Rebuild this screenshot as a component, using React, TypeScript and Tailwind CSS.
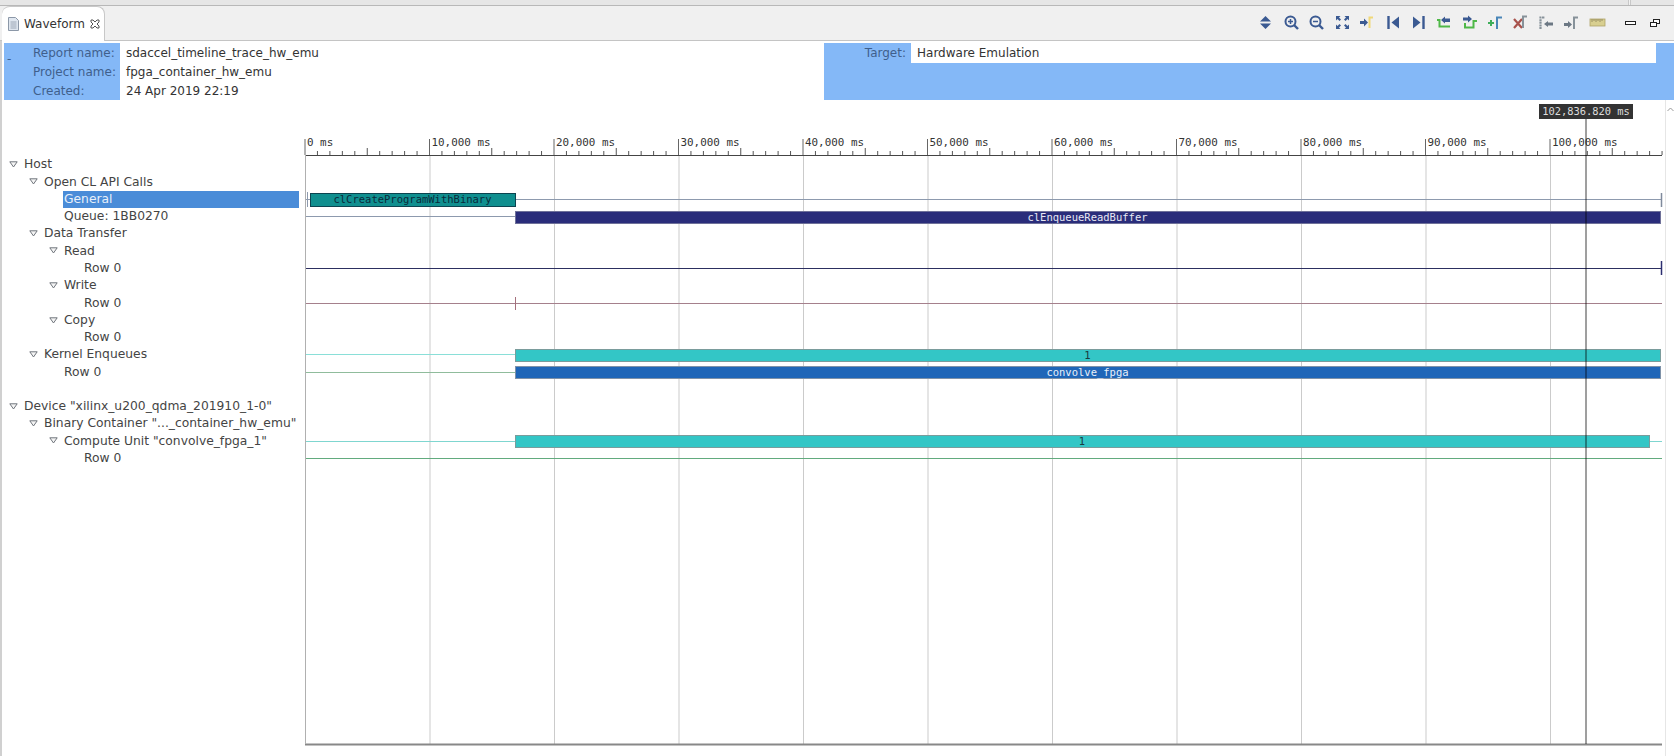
const majors = [0, 10, 20, 30, 40, 50, 60, 70, 80, 90, 100];

const treeRows = [
  { label: 'Host', level: 0, arrow: true },
  { label: 'Open CL API Calls', level: 1, arrow: true },
  { label: 'General', level: 2, selected: true },
  { label: 'Queue: 1BB0270', level: 2 },
  { label: 'Data Transfer', level: 1, arrow: true },
  { label: 'Read', level: 2, arrow: true },
  { label: 'Row 0', level: 3 },
  { label: 'Write', level: 2, arrow: true },
  { label: 'Row 0', level: 3 },
  { label: 'Copy', level: 2, arrow: true },
  { label: 'Row 0', level: 3 },
  { label: 'Kernel Enqueues', level: 1, arrow: true },
  { label: 'Row 0', level: 2 },
  { label: '', level: 0 },
  { label: 'Device "xilinx_u200_qdma_201910_1-0"', level: 0, arrow: true },
  { label: 'Binary Container "..._container_hw_emu"', level: 1, arrow: true },
  { label: 'Compute Unit "convolve_fpga_1"', level: 2, arrow: true },
  { label: 'Row 0', level: 3 },
];

const navy = '#3b5a92';

function Icon({ children }: { children: React.ReactNode }) {
  return (
    <svg width="17" height="17" viewBox="0 0 17 17" fill="none">
      {children}
    </svg>
  );
}

// toolbar, left to right
const toolbarIcons = [
  <Icon key="updown">
    <path d="M8.5 2 L14 7.5 H3 Z M3 9.5 H14 L8.5 15 Z" fill={navy} />
  </Icon>,
  <Icon key="zoomin">
    <circle cx="7.5" cy="7.5" r="5" stroke={navy} strokeWidth="2" />
    <path d="M11 11 L15 15" stroke={navy} strokeWidth="2.4" />
    <path d="M5 7.5 H10 M7.5 5 V10" stroke={navy} strokeWidth="1.5" />
  </Icon>,
  <Icon key="zoomout">
    <circle cx="7.5" cy="7.5" r="5" stroke={navy} strokeWidth="2" />
    <path d="M11 11 L15 15" stroke={navy} strokeWidth="2.4" />
    <path d="M5 7.5 H10" stroke={navy} strokeWidth="1.5" />
  </Icon>,
  <Icon key="fit">
    <path d="M2 2 H6.5 L5 3.5 L7 5.5 L5.5 7 L3.5 5 L2 6.5 Z M15 2 V6.5 L13.5 5 L11.5 7 L10 5.5 L12 3.5 L10.5 2 Z M2 15 V10.5 L3.5 12 L5.5 10 L7 11.5 L5 13.5 L6.5 15 Z M15 15 H10.5 L12 13.5 L10 11.5 L11.5 10 L13.5 12 L15 10.5 Z" fill={navy} />
  </Icon>,
  <Icon key="marker">
    <path d="M1 7 H5 V4.5 L9 8.5 L5 12.5 V10 H1 Z" fill={navy} />
    <path d="M10.5 14 V3.5 H14" stroke="#f0d878" strokeWidth="2" />
  </Icon>,
  <Icon key="prev">
    <path d="M3.5 2 V15" stroke={navy} strokeWidth="2.4" />
    <path d="M14 2.5 V14.5 L6.5 8.5 Z" fill={navy} />
  </Icon>,
  <Icon key="next">
    <path d="M13.5 2 V15" stroke={navy} strokeWidth="2.4" />
    <path d="M3 2.5 V14.5 L10.5 8.5 Z" fill={navy} />
  </Icon>,
  <Icon key="greenprev">
    <path d="M1 6 H3.5 V12.5 H14" stroke="#4fb848" strokeWidth="2" />
    <path d="M5 6 L9 2.5 V4.5 H14 V8 H9 V9.5 Z" fill={navy} />
  </Icon>,
  <Icon key="greennext">
    <path d="M16 7 H12.5 V13.5 H4 V9" stroke="#4fb848" strokeWidth="2" />
    <path d="M2 3.5 H7 V1.5 L11 5 L7 8.5 V6.5 H2 Z" fill={navy} />
  </Icon>,
  <Icon key="addmarker">
    <path d="M1 9 H7 M4 6 V12" stroke="#3fae5a" strokeWidth="2" />
    <path d="M10 15 V3.5 H15" stroke="#4a86b8" strokeWidth="2" />
  </Icon>,
  <Icon key="delmarker">
    <path d="M2 5 L10 14 M10 5 L2 14" stroke="#a8524c" strokeWidth="2.2" />
    <path d="M11 14 V2.5 H15" stroke="#87929a" strokeWidth="2" />
  </Icon>,
  <Icon key="markerprev">
    <path d="M2.5 15 V3.5 H7" stroke="#87929a" strokeWidth="2.2" strokeDasharray="2 0.6" />
    <path d="M6 10 L10 7 V8.5 H15 V11.5 H10 V13 Z" fill="#6c7884" />
  </Icon>,
  <Icon key="markernext">
    <path d="M1 9 H5 V7 L9 10.5 L5 14 V12 H1 Z" fill="#6c7884" />
    <path d="M11 15 V3.5 H15" stroke="#87929a" strokeWidth="2" />
  </Icon>,
  <svg key="ruler" width="17" height="17" viewBox="0 0 17 17" fill="none">
    <rect x="1" y="5" width="15" height="7" fill="#d8cf90" stroke="#b0a468" strokeWidth="0.8" />
    <path d="M3 5 V8 M5 5 V7 M7 5 V8 M9 5 V7 M11 5 V8 M13 5 V7" stroke="#8a8258" strokeWidth="0.8" />
  </svg>,
];

function TreeArrow() {
  return (
    <svg width="9" height="7" viewBox="0 0 9 7" className="shrink-0">
      <path d="M0.8 0.8 H8.2 L4.5 6 Z" fill="#f4f4f4" stroke="#70757c" strokeWidth="1" />
    </svg>
  );
}

function Tree() {
  const pad = ['pl-[7px]', 'pl-[27px]', 'pl-[47px]', 'pl-[67px]'];
  const textPad = ['pl-[22px]', 'pl-[42px]', 'pl-[62px]', 'pl-[82px]'];
  return (
    <div className="w-[283px] shrink-0 pt-[56px]">
      {treeRows.map((row, i) => (
        <div key={i} className="relative flex h-[17.27px] items-center">
          {row.arrow && (
            <span className={`absolute left-0 flex items-center ${pad[row.level]}`}>
              <TreeArrow />
            </span>
          )}
          {row.selected ? (
            <span className="ml-[61px] flex h-[17px] w-[236px] shrink-0 items-center bg-[#4a8cd8] pl-[1px] text-[#e8f0fa]">
              {row.label}
            </span>
          ) : (
            <span className={`whitespace-nowrap ${textPad[row.level]}`}>{row.label}</span>
          )}
        </div>
      ))}
    </div>
  );
}

function Ruler() {
  const ticks = [];
  for (let i = 0; i <= 109; i++) {
    const x = 305 + i * 12.45;
    const top = i % 10 === 0 ? 139 : i % 5 === 0 ? 148 : 151;
    ticks.push(<line key={i} x1={x} x2={x} y1={top} y2={155} stroke={i % 10 === 0 ? '#666' : '#555'} strokeWidth="1" />);
  }
  return (
    <g>
      {ticks}
      <line x1="305" x2="1662" y1="155.5" y2="155.5" stroke="#444" strokeWidth="1" />
      {majors.map((m) => (
        <text key={m} x={305 + m * 12.45 + 2} y="146" fontSize="10.9" fill="#333" fontFamily="'DejaVu Sans Mono', monospace">
          {m === 0 ? '0 ms' : `${m},000 ms`}
        </text>
      ))}
    </g>
  );
}

function Bar({ x, y, w, h, fill, stroke, label, color }: { x: number; y: number; w: number; h: number; fill: string; stroke: string; label: string; color: string }) {
  return (
    <g>
      <rect x={x + 0.5} y={y + 0.5} width={w} height={h} fill={fill} stroke={stroke} strokeWidth="1" />
      <text x={x + w / 2} y={y + h / 2 + 3.5} textAnchor="middle" fontSize="10.5" fill={color} fontFamily="'DejaVu Sans Mono', monospace">
        {label}
      </text>
    </g>
  );
}

function Waveform() {
  return (
    <svg className="shrink-0" width="1380" height="656" viewBox="285 100 1380 656">
      {majors.map((m) => (
        <line key={m} x1={305.5 + m * 12.45} x2={305.5 + m * 12.45} y1="155" y2="744" stroke="#cbcbcb" strokeWidth="1" />
      ))}
      <Ruler />

      {/* General */}
      <line x1="305" x2="1662" y1="199.5" y2="199.5" stroke="#8d9aae" />
      <line x1="307.5" x2="307.5" y1="192" y2="207" stroke="#8d9aae" />
      <line x1="1661.5" x2="1661.5" y1="193" y2="207" stroke="#7f8a9c" strokeWidth="1.5" />
      <Bar x={310} y={193} w={205} h={13} fill="#108f8f" stroke="#0c4450" label="clCreateProgramWithBinary" color="#0a2a3a" />

      {/* Queue */}
      <line x1="305" x2="515" y1="216.5" y2="216.5" stroke="#8d9aae" />
      <Bar x={515} y={211} w={1145} h={12} fill="#2a2d7a" stroke="#6f7199" label="clEnqueueReadBuffer" color="#e8e8f4" />

      {/* Read / Write */}
      <line x1="305" x2="1662" y1="268.5" y2="268.5" stroke="#2c2f60" />
      <line x1="1661.5" x2="1661.5" y1="261" y2="275" stroke="#2c2f70" strokeWidth="1.5" />
      <line x1="305" x2="1662" y1="303.5" y2="303.5" stroke="#a5808c" />
      <line x1="515.5" x2="515.5" y1="297" y2="310" stroke="#a5707c" />

      {/* Kernel enqueues */}
      <line x1="305" x2="515" y1="354.5" y2="354.5" stroke="#8adfd8" />
      <Bar x={515} y={349} w={1145} h={12} fill="#33c6c6" stroke="#7a9c9c" label="1" color="#1a3a40" />
      <line x1="305" x2="515" y1="372.5" y2="372.5" stroke="#90bc9c" />
      <Bar x={515} y={366} w={1145} h={12} fill="#1f66b8" stroke="#7f92a8" label="convolve_fpga" color="#e8f0fa" />

      {/* Compute unit */}
      <line x1="305" x2="1662" y1="441.5" y2="441.5" stroke="#7fd6d0" />
      <Bar x={515} y={435} w={1134} h={12} fill="#33c6c6" stroke="#7a9c9c" label="1" color="#1a3a40" />
      <line x1="305" x2="1662" y1="458.5" y2="458.5" stroke="#62ab7e" />

      <line x1="305" x2="1662" y1="744.5" y2="744.5" stroke="#888" strokeWidth="2" />
      <line x1="305.5" x2="305.5" y1="155" y2="744" stroke="#b0b0b0" />

      {/* cursor */}
      <line x1="1586" x2="1586" y1="119" y2="744" stroke="#000" strokeOpacity="0.5" strokeWidth="1.5" />
      <rect x="1539" y="104" width="94" height="15" fill="#333" />
      <text x="1586" y="115" textAnchor="middle" fontSize="10.4" fill="#ddd" fontFamily="'DejaVu Sans Mono', monospace">
        102,836.820 ms
      </text>
    </svg>
  );
}

export default function App() {
  return (
    <div className="flex h-[756px] w-[1674px] flex-col overflow-hidden bg-white font-['DejaVu_Sans',sans-serif] text-[12.3px] text-[#444]">
      <div className="flex h-[6px] shrink-0 border-b border-[#b8b8b8] bg-[#e6e6e6]">
        <span className="ml-[1628px] h-[5px] w-[3px] border-x border-[#c8c8c8] bg-[#f2f2f2]" />
      </div>

      {/* tab bar */}
      <div className="flex h-[35px] shrink-0 items-end border-b border-[#c4c4c4] bg-[#f0f0f0] pl-[2px]">
        <div className="flex h-[35px] w-[103px] items-center rounded-t-lg border-r border-t border-[#c8c8c8] bg-white pl-[6px] text-[12px] -mb-px">
          <svg width="11" height="14" viewBox="0 0 11 14" className="shrink-0">
            <path d="M0.5 0.5 H7.5 L10.5 3.5 V13.5 H0.5 Z" fill="#dfe6ef" stroke="#8c98a8" />
            <path d="M2.5 5 H8.5 M2.5 7 H8.5 M2.5 9 H8.5 M2.5 11 H8.5" stroke="#8c98a8" strokeWidth="0.8" />
          </svg>
          <span className="ml-[5px] text-[#333]">Waveform</span>
          <svg width="10" height="10" viewBox="0 0 10 10" className="ml-[5px]" fill="none">
            <path d="M1 1 H3 L5 3 L7 1 H9 V3 L7 5 L9 7 V9 H7 L5 7 L3 9 H1 V7 L3 5 L1 3 Z" stroke="#555" strokeWidth="1" />
          </svg>
        </div>
        <div className="ml-auto flex h-[35px] items-center pr-[14px]">
          {toolbarIcons.map((icon, i) => (
            <span key={i} className="flex w-[25.5px] justify-center">
              {icon}
            </span>
          ))}
          <span className="ml-[15px] h-[4px] w-[11px] border border-[#222] bg-white" />
          <span className="relative ml-[14px] h-[8px] w-[10px]">
            <span className="absolute right-0 top-0 h-[5px] w-[7px] border border-[#222] bg-white" />
            <span className="absolute bottom-0 left-0 h-[5px] w-[7px] border border-[#222] bg-white" />
          </span>
        </div>
      </div>

      <div className="flex min-h-0 flex-1 flex-col border-l-2 border-[#d0d0d0]">
        {/* report header */}
        <div className="mt-[2px] flex h-[57px] shrink-0 pl-[2px] text-[12px]">
          <div className="relative flex w-[116px] flex-col bg-[#84b8f7] pl-[29px] text-[#3f5f8c]">
            <span className="absolute left-[3px] top-[7px] text-[#3f5f8c]">-</span>
            <span className="flex h-[19px] items-center">Report name:</span>
            <span className="flex h-[19px] items-center">Project name:</span>
            <span className="flex h-[19px] items-center">Created:</span>
          </div>
          <div className="flex w-[704px] flex-col pl-[6px] text-[#333]">
            <span className="flex h-[19px] items-center">sdaccel_timeline_trace_hw_emu</span>
            <span className="flex h-[19px] items-center">fpga_container_hw_emu</span>
            <span className="flex h-[19px] items-center">24 Apr 2019 22:19</span>
          </div>
          <div className="flex flex-1 items-start bg-[#84b8f7] pr-[18px]">
            <span className="flex h-[19px] w-[87px] items-center justify-end pr-[5px] text-[#3f5f8c]">Target:</span>
            <span className="flex h-[20px] flex-1 items-center bg-white pl-[6px] text-[#333]">Hardware Emulation</span>
          </div>
        </div>

        {/* tree, waveform and scrollbar */}
        <div className="flex min-h-0 flex-1">
          <Tree />
          <Waveform />
          <div className="flex flex-1 justify-center border-l border-[#e6e6e6] pt-[7px]">
            <svg width="7" height="5" viewBox="0 0 7 5" fill="none">
              <path d="M0.5 4 L3.5 1 L6.5 4" stroke="#999" />
            </svg>
          </div>
        </div>
      </div>
    </div>
  );
}
